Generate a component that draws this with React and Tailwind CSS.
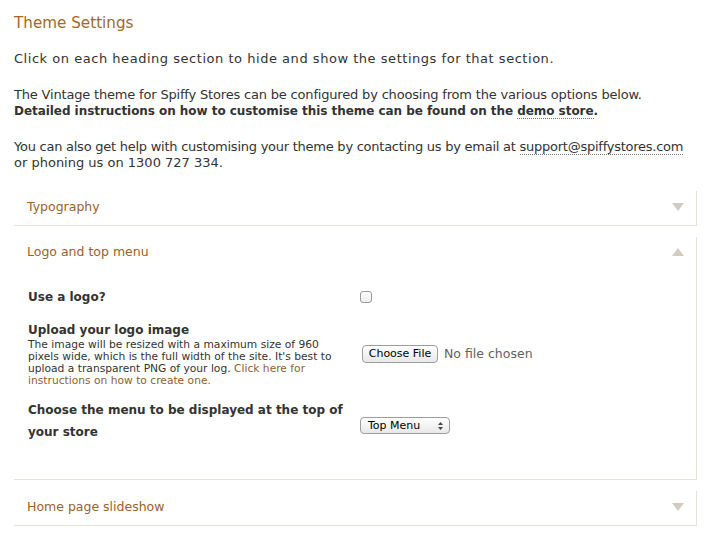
const font = { fontFamily: '"DejaVu Sans", sans-serif' };

const Arrow = ({ up }) => (
  <svg width="12" height="8" viewBox="0 0 12 8" className="shrink-0">
    {up ? <path d="M6 0 L12 8 L0 8 Z" fill="#d3cbc2" /> : <path d="M0 0 L12 0 L6 8 Z" fill="#d3cbc2" />}
  </svg>
);

const Section = ({ title, open, children }) => (
  <div className="mt-[11px] first:mt-0 border-r border-b border-[#e6e2da]">
    <div className={`${open ? "h-[30px]" : "h-[34px] pb-[2px]"} flex items-center justify-between pl-[13px] pr-[12px]`}>
      <span className="text-[12.5px] text-[#9c6129]">{title}</span>
      <Arrow up={open} />
    </div>
    {children}
  </div>
);

export default function App() {
  return (
    <div className="bg-white min-h-[533px] w-[707px] pl-[14px] pr-[10px] pt-[13px] text-[#333] text-[13px] leading-[16px] whitespace-nowrap" style={font}>
      <h1 className="text-[15.2px] leading-[20px] text-[#a4672a]">Theme Settings</h1>

      <p className="mt-[18px] tracking-[0.53px]">Click on each heading section to hide and show the settings for that section.</p>

      <p className="mt-[20px]">
        <span className="tracking-[-0.18px]">The Vintage theme for Spiffy Stores can be configured by choosing from the various options below.</span>
        <br />
        <b className="text-[12px] tracking-[-0.05px]">
          Detailed instructions on how to customise this theme can be found on the{" "}
          <a className="border-b border-dotted border-[#777]">demo store</a>.
        </b>
      </p>

      <p className="mt-[20px]">
        <span className="tracking-[-0.25px]">
          You can also get help with customising your theme by contacting us by email at{" "}
          <a className="border-b border-dotted border-[#777]">support@spiffystores.com</a>
        </span>
        <br />
        or phoning us on 1300 727 334.
      </p>

      <div className="mt-[20px]">
        <Section title="Typography" />

        <Section title="Logo and top menu" open>
          <div className="pl-[14px] pt-[22px] pb-[36px]">
            <div className="flex items-center h-[16px]">
              <div className="w-[332px] font-bold text-[12px]">Use a logo?</div>
              <span className="w-[12px] h-[12px] border border-[#9a9a9a] rounded-[3px] bg-gradient-to-b from-white to-[#ececec]" />
            </div>

            <div className="flex mt-[16px]">
              <div className="w-[332px]">
                <div className="font-bold text-[12px] leading-[18px]">Upload your logo image</div>
                <div className="text-[10.7px] leading-[12px]">
                  The image will be resized with a maximum size of 960
                  <br />
                  pixels wide, which is the full width of the site. It's best to
                  <br />
                  upload a transparent PNG of your log.{" "}
                  <span className="text-[#8f5f2e]">
                    Click here for
                    <br />
                    instructions on how to create one.
                  </span>
                </div>
              </div>
              <div className="flex items-center self-start mt-[24px]">
                <span className="ml-[2px] h-[18px] w-[76px] justify-center flex items-center text-[11px] border border-[#9d9d9d] rounded-[4px] bg-gradient-to-b from-white to-[#e8e8e8] text-black">
                  Choose File
                </span>
                <span className="ml-[6px] text-[12.5px] text-[#5f6166]">No file chosen</span>
              </div>
            </div>

            <div className="flex mt-[12px]">
              <div className="w-[332px] font-bold text-[12px] leading-[22px]">
                Choose the menu to be displayed at the top of
                <br />
                your store
              </div>
              <div className="self-start mt-[18px]">
                <span className="w-[90px] h-[17px] pl-[7px] pr-[6px] flex items-center justify-between text-[11px] border border-[#9d9d9d] rounded-[4px] bg-gradient-to-b from-white to-[#e8e8e8] text-black">
                  Top Menu
                  <svg width="5" height="8" viewBox="0 0 5 8">
                    <path d="M2.5 0 L5 3 L0 3 Z M0 5 L5 5 L2.5 8 Z" fill="#444" />
                  </svg>
                </span>
              </div>
            </div>
          </div>
        </Section>

        <Section title="Home page slideshow" />
      </div>
    </div>
  );
}
